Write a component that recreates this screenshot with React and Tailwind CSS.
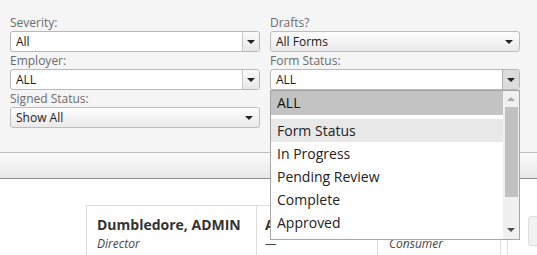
import { useState } from "react";

const Caret = ({ color = "#222" }) => (
  <svg width="8" height="4" viewBox="0 0 8 4">
    <polygon points="0,0 8,0 4,4" fill={color} />
  </svg>
);

const ComboSelect = ({ value, active }) => (
  <div className="flex h-[21px] overflow-hidden rounded-[3px] border border-[#b8b8b8] bg-white">
    <span className="flex-1 pl-[5px] text-[12px] leading-[19px] text-[#1a1a1a]">{value}</span>
    <span
      className={
        active
          ? "flex w-[17px] items-center justify-center border-l border-[#b0b0b0] bg-[#dcdcdc]"
          : "flex w-[17px] items-center justify-center border-l border-[#c8c8c8] bg-gradient-to-b from-[#fafafa] to-[#e8e8e8]"
      }
    >
      <Caret />
    </span>
  </div>
);

const DropSelect = ({ value }) => (
  <div className="flex h-[21px] items-center justify-between rounded-[3px] border border-[#bdbdbd] bg-gradient-to-b from-[#fdfdfd] to-[#eaeaea] pl-[5px] pr-[6px]">
    <span className="text-[12px] leading-[19px] text-[#1a1a1a]">{value}</span>
    <Caret />
  </div>
);

const Label = ({ children }) => (
  <div className="h-[17px] text-[12px] leading-[17px] text-[#6b6b6b]">{children}</div>
);

const statuses = ["Form Status", "In Progress", "Pending Review", "Complete", "Approved"];

const StatusList = () => {
  const [hover] = useState("Form Status");
  return (
    <div className="absolute left-0 top-full z-10 h-[150px] w-full overflow-hidden border border-[#a5a5a5] bg-white">
      <div className="mr-[16px]">
        <div className="h-[24px] bg-[#c3c3c3] pl-[6px] text-[14px] leading-[24px] text-[#111]">ALL</div>
        <div className="pt-[4px]">
          {statuses.map((s) => (
            <div
              key={s}
              className={
                s === hover
                  ? "h-[23px] bg-[#e8e8e8] pl-[6px] text-[14px] leading-[24px] text-[#222]"
                  : "h-[23px] pl-[6px] text-[14px] leading-[24px] text-[#222]"
              }
            >
              {s}
            </div>
          ))}
        </div>
      </div>
      <div className="absolute right-0 top-0 flex h-full w-[16px] flex-col items-center bg-[#f0f0f0]">
        <div className="flex h-[16px] items-center justify-center">
          <svg width="8" height="4" viewBox="0 0 8 4">
            <polygon points="0,4 8,4 4,0" fill="#a8a8a8" />
          </svg>
        </div>
        <div className="h-[90px] w-[13px] bg-[#c1c1c1]" />
        <div className="flex-1" />
        <div className="flex h-[18px] items-center justify-center">
          <Caret color="#505050" />
        </div>
      </div>
    </div>
  );
};

const Card = ({ name, role, className }) => (
  <div className={className}>
    <div className="truncate text-[14px] font-bold leading-[20px] text-[#333]">{name}</div>
    <div className="truncate text-[12px] italic leading-[18px] text-[#444]">{role}</div>
  </div>
);

export default function App() {
  return (
    <div className="h-[255px] w-[537px] overflow-hidden bg-white font-['Open_Sans',sans-serif]">
      <div className="flex h-[152px] gap-[10px] bg-[#f5f5f5] px-[10px] pt-[14px]">
        <div className="w-[250px]">
          <Label>Severity:</Label>
          <ComboSelect value="All" />
          <Label>Employer:</Label>
          <ComboSelect value="ALL" />
          <Label>Signed Status:</Label>
          <DropSelect value="Show All" />
        </div>
        <div className="w-[250px]">
          <Label>Drafts?</Label>
          <DropSelect value="All Forms" />
          <Label>Form Status:</Label>
          <div className="relative">
            <ComboSelect value="ALL" active />
            <StatusList />
          </div>
        </div>
      </div>
      <div className="h-[27px] border-y border-t-[#bdbdbd] border-b-[#8c8c8c] bg-gradient-to-b from-[#fbfbfb] to-[#e8e8e8]" />
      <div className="flex pl-[86px] pt-[26px]">
        <Card
          name="Dumbledore, ADMIN"
          role="Director"
          className="h-[60px] w-[171px] shrink-0 whitespace-nowrap border border-[#dcdcdc] pl-[10px] pr-[4px] pt-[9px]"
        />
        <Card
          name="Abbott, Hannah"
          role="—"
          className="h-[60px] w-[121px] shrink-0 whitespace-nowrap border-y border-r border-[#dcdcdc] pl-[8px] pr-[6px] pt-[9px]"
        />
        <Card
          name="Brown, Lavender"
          role="Consumer"
          className="h-[60px] w-[123px] shrink-0 whitespace-nowrap border-y border-r border-[#dcdcdc] pl-[11px] pr-[6px] pt-[9px]"
        />
        <div className="ml-[6px] h-[60px] w-[60px] shrink-0 border-l border-[#dcdcdc] pl-[20px] pt-[11px]">
          <div className="h-[30px] w-[30px] rounded-[3px] border border-[#dedede] bg-[#f2f2f2]" />
        </div>
      </div>
    </div>
  );
}
